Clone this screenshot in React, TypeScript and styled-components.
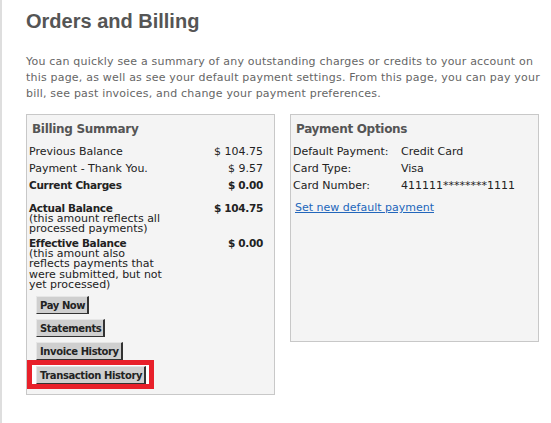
import React from 'react';
import styled, { createGlobalStyle } from 'styled-components';

const GlobalStyle = createGlobalStyle`
    body {
        margin: 0;
        background: #fff;
        font-family: "DejaVu Sans", Verdana, sans-serif;
    }
`;

const Page = styled.div`
    min-height: 423px;
    box-sizing: border-box;
    border-left: 2px solid #dedede;
    padding: 10px 0 0 24px;
`;

const Title = styled.h1`
    margin: 0;
    font-family: "Liberation Sans", Arial, sans-serif;
    font-size: 20px;
    line-height: 23px;
    font-weight: bold;
    color: #555;
`;

const Intro = styled.p`
    margin: 21px 0 0;
    font-size: 11px;
    line-height: 16px;
    letter-spacing: 0.2px;
    color: #666;
    white-space: nowrap;
`;

const Columns = styled.div`
    display: flex;
    align-items: flex-start;
    gap: 15px;
    margin-top: 12px;
`;

const Box = styled.div<{ $height?: number }>`
    width: 249px;
    box-sizing: border-box;
    ${p => p.$height ? `height: ${p.$height}px;` : ''}
    background: #f4f4f4;
    border: 1px solid #c8c8c8;
    padding: 7px 0 5px 2px;
`;

const BoxTitle = styled.h2`
    margin: 0 0 6px 3px;
    font-size: 12px;
    line-height: 15px;
    font-weight: bold;
    letter-spacing: -0.3px;
    color: #555;
`;

const SummaryGrid = styled.div`
    display: grid;
    grid-template-columns: 1fr auto;
    padding-right: 11px;
    color: #222;
    font-size: 11px;
`;

const Label = styled.div<{ $bold?: boolean; $gap?: number }>`
    line-height: 17px;
    margin-top: ${p => p.$gap || 0}px;
    ${p => p.$bold && `
        font-weight: bold;
        font-size: 10.5px;
        letter-spacing: -0.3px;
    `}
`;

const Amount = styled(Label)`
    text-align: right;
`;

const Note = styled.span`
    display: block;
    font-weight: normal;
    font-size: 11px;
    letter-spacing: 0;
    line-height: 10.4px;
    margin-top: -3px;
`;

const Buttons = styled.div`
    margin-top: 6px;
`;

const Button = styled.button`
    display: block;
    margin: 0 0 5px 7px;
    padding: 1px 2px 1px 3px;
    height: 18px;
    font-family: "DejaVu Sans", Verdana, sans-serif;
    font-size: 10px;
    font-weight: bold;
    letter-spacing: -0.4px;
    color: #222;
    background: #cfcfcf;
    border: 1px solid;
    border-width: 1px 2px 1px 1px;
    border-color: #e6e6e6 #333 #333 #e6e6e6;
    cursor: pointer;
`;

const Highlight = styled.div`
    width: fit-content;
    margin: -5px 0 0 -2px;
    padding: 1px 3px 0 4px;
    background: #fff;
    border: 5px solid #e8202a;

    ${Button} {
        margin: 0;
    }
`;

const OptionsGrid = styled.div`
    display: grid;
    grid-template-columns: 108px auto;
    font-size: 11px;
    line-height: 17px;
    color: #222;
`;

const CardLink = styled.a`
    display: inline-block;
    margin: 7px 0 0 2px;
    font-size: 11px;
    color: #2266bb;
    text-decoration: underline;
`;

const summary = [
    { label: 'Previous Balance', amount: '$ 104.75' },
    { label: 'Payment - Thank You.', amount: '$ 9.57' },
    { label: 'Current Charges', amount: '$ 0.00', bold: true },
];

const options = [
    ['Default Payment:', 'Credit Card'],
    ['Card Type:', 'Visa'],
    ['Card Number:', '411111********1111'],
];

export default function App() {
    return (
        <>
            <GlobalStyle />
            <Page>
                <Title>Orders and Billing</Title>
                <Intro>
                    You can quickly see a summary of any outstanding charges or credits to your account on<br />
                    this page, as well as see your default payment settings. From this page, you can pay your<br />
                    bill, see past invoices, and change your payment preferences.
                </Intro>
                <Columns>
                    <Box>
                        <BoxTitle>Billing Summary</BoxTitle>
                        <SummaryGrid>
                            {summary.map(row => (
                                <React.Fragment key={row.label}>
                                    <Label $bold={row.bold}>{row.label}</Label>
                                    <Amount $bold={row.bold}>{row.amount}</Amount>
                                </React.Fragment>
                            ))}
                            <Label $bold $gap={6}>
                                Actual Balance
                                <Note>(this amount reflects all<br />processed payments)</Note>
                            </Label>
                            <Amount $bold $gap={6}>$ 104.75</Amount>
                            <Label $bold>
                                Effective Balance
                                <Note>(this amount also<br />reflects payments that<br />were submitted, but not<br />yet processed)</Note>
                            </Label>
                            <Amount $bold>$ 0.00</Amount>
                        </SummaryGrid>
                        <Buttons>
                            <Button>Pay Now</Button>
                            <Button>Statements</Button>
                            <Button>Invoice History</Button>
                            <Highlight>
                                <Button>Transaction History</Button>
                            </Highlight>
                        </Buttons>
                    </Box>
                    <Box $height={228}>
                        <BoxTitle>Payment Options</BoxTitle>
                        <OptionsGrid>
                            {options.map(([k, v]) => (
                                <React.Fragment key={k}>
                                    <span>{k}</span>
                                    <span>{v}</span>
                                </React.Fragment>
                            ))}
                        </OptionsGrid>
                        <CardLink href="#">Set new default payment</CardLink>
                    </Box>
                </Columns>
            </Page>
        </>
    );
}
